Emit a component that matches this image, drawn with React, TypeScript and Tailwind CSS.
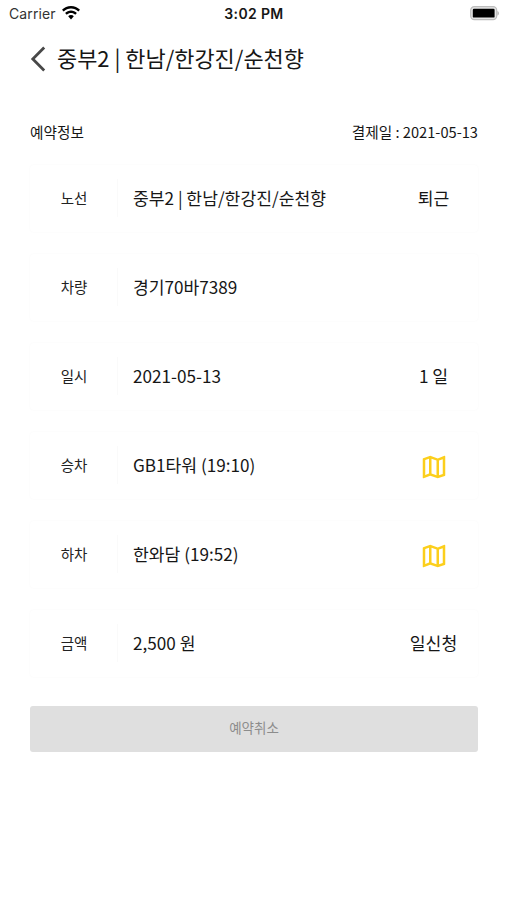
import type { ReactNode } from 'react'
import { MdOutlineMap } from 'react-icons/md'

interface RowProps {
    label: string
    value: string
    extra?: ReactNode
}

const mapIcon = <MdOutlineMap className="mt-[5px] size-[30px] text-[#fccf1c]" />

const rows: RowProps[] = [
    { label: '노선', value: '중부2 | 한남/한강진/순천향', extra: '퇴근' },
    { label: '차량', value: '경기70바7389' },
    { label: '일시', value: '2021-05-13', extra: '1 일' },
    { label: '승차', value: 'GB1타워 (19:10)', extra: mapIcon },
    { label: '하차', value: '한와담 (19:52)', extra: mapIcon },
    { label: '금액', value: '2,500 원', extra: '일신청' },
]

function StatusBar() {
    return (
        <div className="grid h-7 grid-cols-3 items-center pl-[9px] pr-[8px] font-['Inter','Liberation_Sans',sans-serif] text-[#161616]">
            <div className="flex items-center gap-[6px]">
                <span className="text-[14px] leading-none tracking-[0.1px] text-[#333]">Carrier</span>
                <svg viewBox="0 0 18 14" className="-mt-[2px] h-[14px] w-[18px] fill-black">
                    <path d="M9 0C5.5 0 2.3 1.4 0 3.7l1.7 1.8C3.6 3.6 6.2 2.5 9 2.5s5.4 1.1 7.3 3L18 3.7C15.7 1.4 12.5 0 9 0z" />
                    <path d="M9 4.5c-2.3 0-4.4.9-5.9 2.4l1.7 1.8C5.9 7.6 7.4 7 9 7s3.1.6 4.2 1.7l1.7-1.8C13.4 5.4 11.3 4.5 9 4.5z" />
                    <path d="M9 9c-1.1 0-2.1.4-2.8 1.2L9 13.4l2.8-3.2C11.1 9.4 10.1 9 9 9z" />
                </svg>
            </div>
            <span className="text-center text-[14px] font-semibold leading-none tracking-[0.35px] whitespace-nowrap">3:02 PM</span>
            <svg viewBox="0 0 31 15" className="-mt-px h-[15px] w-[31px] justify-self-end">
                <rect x="2.7" y="0.7" width="26" height="13" rx="3.6" fill="#e6e6e6" stroke="#bdbdbd" strokeWidth="1.2" />
                <rect x="4.8" y="2.8" width="21.8" height="8.8" rx="1.2" fill="#000" />
                <path d="M29.5 5v4.6c.8-.4 1.3-1.2 1.3-2.3S30.3 5.4 29.5 5z" fill="#aaa" />
            </svg>
        </div>
    )
}

function Row({ label, value, extra }: RowProps) {
    return (
        <div className="flex h-[67px] items-center rounded-sm bg-white pb-[2px] shadow-[0_0_2px_rgba(0,0,0,0.04)]">
            <div className="w-[87px] pl-px text-center text-[14.5px] text-[#222]">{label}</div>
            <div className="h-[38px] w-px bg-[#fafafa]" />
            <div className="flex-1 pl-[15px] text-[17.15px] whitespace-nowrap">{value}</div>
            <div className="flex w-[89px] items-center justify-center text-[17.2px]">{extra}</div>
        </div>
    )
}

export default function App() {
    return (
        <div className="min-h-screen bg-white font-['Noto_Sans_CJK_KR',sans-serif] text-[#161616]">
            <StatusBar />

            <header className="flex h-[62px] items-center pl-[30px]">
                <svg viewBox="0 0 16 26" className="h-[26px] w-4" fill="none" stroke="#484848" strokeWidth="2.8">
                    <path d="M14.2 1.6L2.8 13l11.4 11.4" />
                </svg>
                <h1 className="pb-[3px] pl-[11px] text-[21.95px] leading-none">중부2 | 한남/한강진/순천향</h1>
            </header>

            <main className="pl-[30px] pr-[29px]">
                <div className="flex h-[75px] items-center justify-between pt-[8px] text-[14.65px]">
                    <span>예약정보</span>
                    <span>결제일 : 2021-05-13</span>
                </div>

                <div className="flex flex-col gap-[22px]">
                    {rows.map((row) => (
                        <Row key={row.label} {...row} />
                    ))}
                </div>

                <button type="button" disabled className="mt-[29px] h-[46px] w-full rounded-[3px] bg-[#dfdfdf] pb-[4px] text-[13.5px] text-[#8c8c8c]">
                    예약취소
                </button>
            </main>
        </div>
    )
}
